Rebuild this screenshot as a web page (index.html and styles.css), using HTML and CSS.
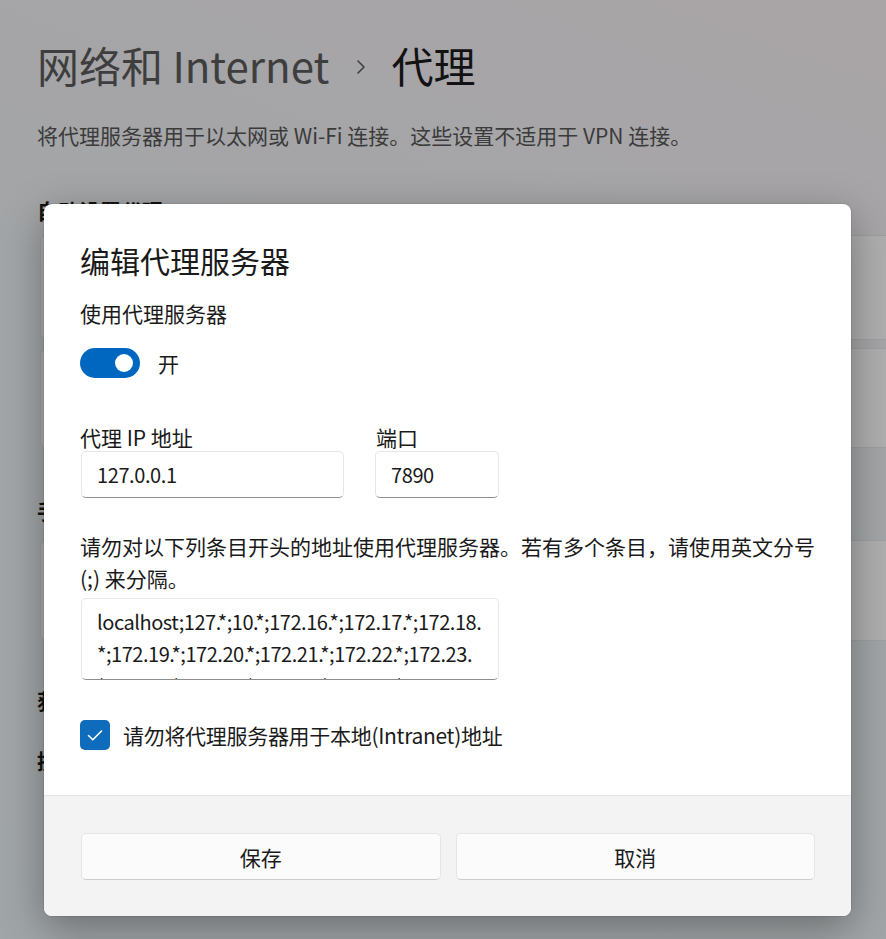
FILE: index.html
```html
<!DOCTYPE html>
<html lang="zh-CN">
<head>
<meta charset="utf-8">
<title>代理</title>
<link rel="stylesheet" href="styles.css">
</head>
<body>
<div class="page">
  <h1 class="crumb">
    <span class="crumb-parent">网络和 Internet</span>
    <svg class="chev" width="12" height="18" viewBox="0 0 12 18"><path d="M3 3 L9 9 L3 15" fill="none" stroke="#5c5c5c" stroke-width="1.6" stroke-linecap="round" stroke-linejoin="round"/></svg>
    <span class="crumb-cur">代理</span>
  </h1>
  <p class="sub">将代理服务器用于以太网或 Wi-Fi 连接。这些设置不适用于 VPN 连接。</p>
  <div class="sec">自动设置代理</div>
  <div class="card card-first">自动检测设置</div>
  <div class="card card-gap">使用设置脚本</div>
  <div class="sec sec2">手动设置代理</div>
  <div class="card card-manual">使用代理服务器</div>
  <div class="foot-links">
    <div class="flink">获取帮助</div>
    <div class="flink">提供反馈</div>
  </div>
</div>
<div class="scrim"></div>

<div class="dialog">
  <div class="dlg-body">
    <div class="dlg-title">编辑代理服务器</div>
    <div class="lbl">使用代理服务器</div>
    <div class="toggle-row">
      <span class="toggle"><span class="knob"></span></span>
      <span class="toggle-text">开</span>
    </div>
    <div class="fields">
      <div class="field">
        <div class="flabel">代理 IP 地址</div>
        <div class="input input-ip">127.0.0.1</div>
      </div>
      <div class="field">
        <div class="flabel">端口</div>
        <div class="input input-port">7890</div>
      </div>
    </div>
    <div class="desc">请勿对以下列条目开头的地址使用代理服务器。若有多个条目，请使用英文分号 (;) 来分隔。</div>
    <div class="textarea">
      <div class="ta-inner">
        <div class="ta-line">localhost;127.*;10.*;172.16.*;172.17.*;172.18.</div>
        <div class="ta-line">*;172.19.*;172.20.*;172.21.*;172.22.*;172.23.</div>
        <div class="ta-line">*;172.24.*;172.25.*;172.26.*;172.27.*;172.28.</div>
      </div>
    </div>
    <div class="check-row">
      <span class="checkbox">
        <svg width="30" height="30" viewBox="0 0 30 30"><path d="M8.5 15.5 L12.8 19.8 L21.5 11" fill="none" stroke="#fff" stroke-width="1.6" stroke-linecap="round" stroke-linejoin="round"/></svg>
      </span>
      <span class="check-text">请勿将代理服务器用于本地(Intranet)地址</span>
    </div>
  </div>
  <div class="dlg-footer">
    <button class="btn">保存</button>
    <button class="btn">取消</button>
  </div>
</div>
</body>
</html>
```

FILE: styles.css
```css
* { box-sizing: border-box; }

html, body {
  margin: 0;
  padding: 0;
}

body {
  width: 886px;
  height: 939px;
  overflow: hidden;
  position: relative;
  font-family: "Noto Sans CJK SC", "Noto Sans", sans-serif;
  color: #1a1a1a;
  background: linear-gradient(200deg, #f3ecf0 0%, #e9edf0 45%, #e6ecef 100%);
}

.page {
  padding: 36px 0 0 37px;
}

.crumb {
  margin: 0;
  display: flex;
  align-items: center;
  gap: 20px;
  font-size: 42px;
  line-height: 58px;
  font-weight: 400;
}

.crumb-parent {
  color: #5a5a5a;
}

.crumb-cur {
  color: #1a1a1a;
}

.chev {
  margin: 4px 4px 0 6px;
}

.sub {
  margin: 26px 0 0;
  font-size: 21px;
  line-height: 30px;
  color: #555;
}

.sec {
  margin-top: 45px;
  font-size: 21px;
  line-height: 30px;
  font-weight: 600;
  color: #1a1a1a;
}

.sec2 {
  margin-top: 47px;
}

.card {
  height: 105px;
  background: #f9f9f9;
  border: 1px solid #e3e3e3;
  border-radius: 6px;
  margin-left: 3px;
  margin-right: -20px;
  padding: 30px 24px;
  font-size: 21px;
}

.card-first {
  margin-top: 10px;
}

.card-gap {
  margin-top: 8px;
  height: 100px;
}

.card-manual {
  margin-top: 15px;
  height: 101px;
}

.foot-links {
  margin-top: 44px;
  display: flex;
  flex-direction: column;
  gap: 30px;
  font-size: 21px;
  line-height: 30px;
  font-weight: 600;
}

.scrim {
  position: absolute;
  inset: 0;
  background: rgba(0, 0, 0, 0.3);
}

.dialog {
  position: absolute;
  left: 44px;
  top: 204px;
  width: 807px;
  height: 712px;
  background: #fff;
  border-radius: 8px;
  box-shadow: 0 12px 40px rgba(0, 0, 0, 0.34), 0 0 0 1px rgba(0, 0, 0, 0.07);
  display: flex;
  flex-direction: column;
  overflow: hidden;
  font-size: 21px;
  color: #1a1a1a;
}

.dlg-body {
  flex: 1;
  padding: 36px 36px 0;
}

.dlg-title {
  font-size: 30px;
  line-height: 40px;
}

.lbl {
  margin-top: 18px;
  line-height: 30px;
}

.toggle-row {
  margin-top: 20px;
  height: 30px;
  display: flex;
  align-items: center;
  gap: 18px;
}

.toggle {
  width: 60px;
  height: 30px;
  border-radius: 15px;
  background: #0067c0;
  display: flex;
  align-items: center;
  justify-content: flex-end;
  padding-right: 7px;
}

.knob {
  width: 18px;
  height: 18px;
  border-radius: 50%;
  background: #fff;
}

.toggle-text {
  line-height: 30px;
}

.fields {
  margin-top: 45px;
  display: flex;
  gap: 32px;
}

.flabel {
  line-height: 28px;
}

.input {
  height: 47px;
  border: 1px solid #e6e6e6;
  border-bottom-color: #8d8d8d;
  border-radius: 5px;
  background: #fff;
  padding: 0 15px;
  display: flex;
  align-items: center;
  line-height: 30px;
  font-size: 20px;
  letter-spacing: -0.4px;
}

.input-ip {
  width: 263px;
  margin-left: 1px;
}

.input-port {
  width: 124px;
  margin-left: -1px;
}

.desc {
  margin-top: 32px;
  line-height: 32px;
}

.textarea {
  margin-top: 4px;
  margin-left: 1px;
  width: 418px;
  height: 82px;
  border: 1px solid #e6e6e6;
  border-bottom-color: #8d8d8d;
  border-radius: 5px;
  overflow: hidden;
}

.ta-inner {
  padding: 7px 0 0 15px;
  line-height: 32px;
  white-space: nowrap;
  font-size: 20px;
  letter-spacing: -0.45px;
}

.check-row {
  margin-top: 40px;
  display: flex;
  align-items: center;
  gap: 13px;
}

.checkbox {
  width: 30px;
  height: 30px;
  border-radius: 5px;
  background: #0f6cbd;
  display: block;
}

.checkbox svg {
  display: block;
}

.check-text {
  line-height: 30px;
  letter-spacing: -0.3px;
}

.dlg-footer {
  height: 121px;
  background: #f3f3f3;
  border-top: 1px solid #e5e5e5;
  padding: 37px 36px 0;
  display: grid;
  grid-template-columns: 1fr 1fr;
  gap: 14px;
  align-content: start;
}

.btn {
  height: 47px;
  border: 1px solid #e5e5e5;
  border-bottom-color: #cccccc;
  border-radius: 5px;
  background: #fbfbfb;
  font: inherit;
  font-size: 21px;
  color: #1a1a1a;
  margin-left: 1px;
}
```
